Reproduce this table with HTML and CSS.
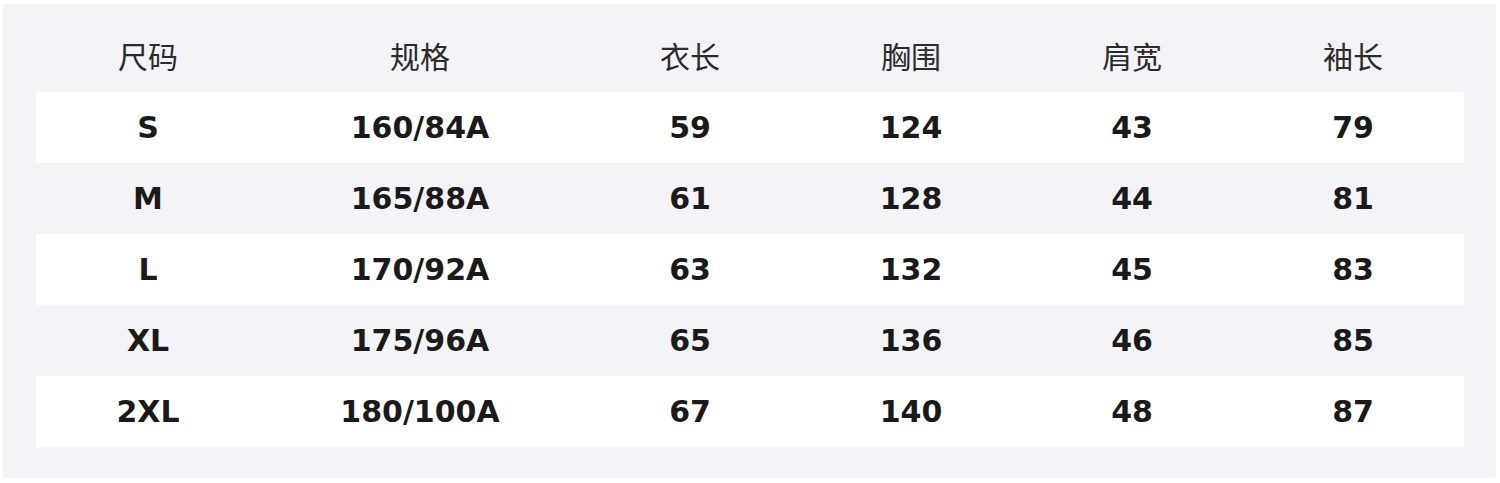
FILE: index.html
```html
<!DOCTYPE html>
<html lang="zh">
<head>
<meta charset="utf-8">
<link rel="stylesheet" href="styles.css">
</head>
<body>
<div class="card">
  <div class="table">
    <div class="row head">
      <div class="cell">尺码</div><div class="cell">规格</div><div class="cell">衣长</div><div class="cell">胸围</div><div class="cell">肩宽</div><div class="cell">袖长</div>
    </div>
    <div class="row data white">
      <div class="cell">S</div><div class="cell">160/84A</div><div class="cell">59</div><div class="cell">124</div><div class="cell">43</div><div class="cell">79</div>
    </div>
    <div class="row data">
      <div class="cell">M</div><div class="cell">165/88A</div><div class="cell">61</div><div class="cell">128</div><div class="cell">44</div><div class="cell">81</div>
    </div>
    <div class="row data white">
      <div class="cell">L</div><div class="cell">170/92A</div><div class="cell">63</div><div class="cell">132</div><div class="cell">45</div><div class="cell">83</div>
    </div>
    <div class="row data">
      <div class="cell">XL</div><div class="cell">175/96A</div><div class="cell">65</div><div class="cell">136</div><div class="cell">46</div><div class="cell">85</div>
    </div>
    <div class="row data white">
      <div class="cell">2XL</div><div class="cell">180/100A</div><div class="cell">67</div><div class="cell">140</div><div class="cell">48</div><div class="cell">87</div>
    </div>
  </div>
</div>
</body>
</html>
```
FILE: styles.css
```css
html, body {
  margin: 0;
  background: #ffffff;
}
body {
  padding: 4px 4px 5px 3px;
}
.card {
  background: #f3f3f8;
  height: 474px;
  box-sizing: border-box;
  padding: 0 32px 31px 33px;
  border-radius: 2px;
}
.table {
  display: flex;
  flex-direction: column;
}
.row {
  display: grid;
  grid-template-columns: 224px 320px 220px 222px 220px 222px;
  align-items: center;
}
.cell {
  text-align: center;
}
.head {
  height: 88px;
  box-sizing: border-box;
  padding-top: 13px;
  font-family: "Noto Sans CJK SC", "Noto Sans", sans-serif;
  font-size: 30px;
  color: #2b2b2b;
}
.data {
  height: 71px;
  font-family: "DejaVu Sans", sans-serif;
  font-weight: bold;
  font-size: 30px;
  color: #1a1a1a;
}
.white {
  background: #ffffff;
}
```
